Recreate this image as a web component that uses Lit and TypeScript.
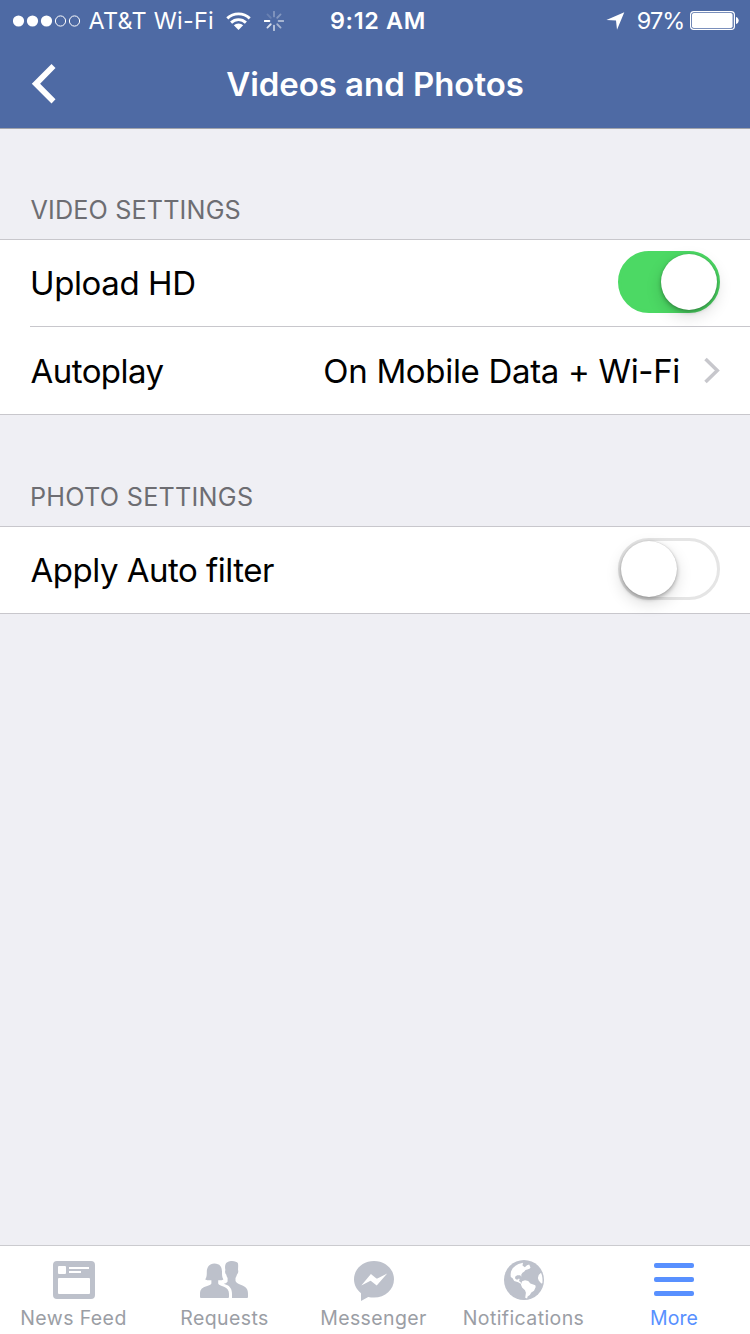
import { LitElement, html, css, svg } from "lit";
import { customElement, property } from "lit/decorators.js";
import { classMap } from "lit/directives/class-map.js";

@customElement("status-bar")
export class StatusBar extends LitElement {
  static styles = css`
    :host {
      display: grid;
      grid-template-columns: 330px auto 1fr;
      align-items: center;
      height: 41px;
      color: #fff;
      font-size: 23.4px;
      line-height: 28px;
      white-space: nowrap;
    }
    .side { display: flex; align-items: center; }
    .left { padding-left: 13px; }
    .right { justify-content: flex-end; padding-right: 11px; }
    svg { display: block; flex: none; }
    .carrier { margin-left: 7.5px; letter-spacing: 0.26px; }
    .wifi { margin-left: 12px; }
    .spinner { margin-left: 13px; }
    .time { font-weight: 600; letter-spacing: 0.65px; }
    .percent { margin: 0 5.5px 0 11.5px; letter-spacing: -0.8px; }
  `;

  render() {
    const spokes = [0.3, 0.3, 0.5, 0.5, 0.65, 0.8, 1, 0.15];
    return html`
      <div class="side left">
        <svg width="68" height="12" viewBox="0 0 68 12">
          ${[0, 1, 2].map((i) => svg`<circle cx=${5.5 + i * 14} cy="6" r="5.6" fill="#fff"/>`)}
          ${[3, 4].map((i) => svg`<circle cx=${5.5 + i * 14} cy="6" r="5.1" fill="none" stroke="#fff"/>`)}
        </svg>
        <span class="carrier">AT&amp;T Wi-Fi</span>
        <svg class="wifi" width="25" height="20" viewBox="0 0 25 20">
          <g fill="none" stroke="#fff" stroke-width="2.9">
            <path d="M1.3 7.4a16 16 0 0 1 22.4 0"/>
            <path d="M5.1 11.6a10.6 10.6 0 0 1 14.8 0"/>
          </g>
          <path d="M12.5 19 7.8 14.3a6.8 6.8 0 0 1 9.4 0z" fill="#fff"/>
        </svg>
        <svg class="spinner" width="20" height="20" viewBox="-10 -10 20 20">
          ${spokes.map((o, i) => svg`<path d="M0-4.6V-9.3" stroke="#fff" stroke-width="1.8" stroke-linecap="round"
            opacity=${o} transform=${`rotate(${i * 45})`}/>`)}
        </svg>
      </div>
      <span class="time">9:12 AM</span>
      <div class="side right">
        <svg width="19" height="18" viewBox="0 0 19 18"><path d="M18.3.2 11 17.8 10 8.6.4 7.9z" fill="#fff"/></svg>
        <span class="percent">97%</span>
        <svg width="49" height="19" viewBox="0 0 49 19">
          <rect x=".6" y=".6" width="43.8" height="17.8" rx="3.2" fill="none" stroke="#fff" stroke-width="1.2"/>
          <rect x="2" y="2" width="40.6" height="15" rx="1.8" fill="#fff"/>
          <path d="M46 6c3.6 1 3.6 6 0 7z" fill="#fff"/>
        </svg>
      </div>
    `;
  }
}

@customElement("toggle-switch")
export class ToggleSwitch extends LitElement {
  @property({ type: Boolean }) on = false;

  static styles = css`
    :host { display: block; }
    .track {
      box-sizing: border-box;
      display: flex;
      width: 102px;
      height: 62px;
      border: 3px solid #e5e5e5;
      border-radius: 31px;
      background: #fff;
    }
    .track.on { justify-content: flex-end; border-color: #4cd964; background: #4cd964; }
    .knob {
      width: 56px;
      height: 56px;
      border-radius: 50%;
      background: #fff;
      box-shadow: 0 6px 16px rgba(0, 0, 0, 0.15), 0 2px 4px rgba(0, 0, 0, 0.28), 0 0 1px rgba(0, 0, 0, 0.2);
    }
  `;

  render() {
    return html`<div class=${classMap({ track: true, on: this.on })}><div class="knob"></div></div>`;
  }
}

const ICONS = {
  feed: svg`
    <path fill-rule="evenodd" d="M7 5h34a4 4 0 0 1 4 4v30a4 4 0 0 1-4 4H7a4 4 0 0 1-4-4V9a4 4 0 0 1 4-4z
      M9 10a1 1 0 0 0-1 1v6a1 1 0 0 0 1 1h6a1 1 0 0 0 1-1v-6a1 1 0 0 0-1-1z
      M19 11v2h20v-2z M19 15v2h12v-2z
      M9 22a1 1 0 0 0-1 1v14a1 1 0 0 0 1 1h30a1 1 0 0 0 1-1V23a1 1 0 0 0-1-1z"/>`,
  requests: svg`
    <path d="M14.3 7.5C9.300 7.500 6.800 11.500 6.800 16c0 3 0 5-1.600 7.500 1.600.8 3.800 1 6.200.8v3.200C11 29 8 29.500 5 30.700 1.500 32 0 34 0 38v3a1 1 0 0 0 1 1h27a1 1 0 0 0 1-1v-3c0-4-1.700-6-5-7.300-3-1.200-5.500-1.700-5.800-3.200v-3.200c2.200.2 3.900 0 5.200-.8C22 21 22 19 22 16c0-5-2-8.500-7.700-8.500z"/>
    <path d="M25.300 9C26 6 29 5 32 5c3 0 5 1 5.800 2 .7 2 .2 5 .2 7 .6 1 .2 3.500-1 4.500-.4 1.500-1 2.500-1.500 3.500v3c.5 2 3.500 3 7 4.600 4 1.800 5.500 3.900 5.500 8.400v3a1 1 0 0 1-1 1H32v-4c0-5-2-7.500-5-9l-3.300-1.300c1.800-.3 3.300-.9 3.900-2.200V22c-.6-1-1.100-2-1.400-3.500-1.200-1-1.400-3.500-.8-4.500-.4-1.700-.5-3.300-.1-5z"/>`,
  messenger: svg`
    <path fill-rule="evenodd" d="M24 5c11.200 0 20 8 20 18.300S35.200 41.600 24 41.600c-2 0-4-.2-5.800-.6L11 45v-7.800C6.700 33.800 4 28.900 4 23.300 4 13 12.800 5 24 5z
      M11.300 29.400 20.900 17.900 26.400 22.400Q26.900 22.700 27.400 22.400L37.200 17.600 26.700 29.400 21 24.900Q20.500 24.600 20 24.900z"/>`,
  globe: svg`
    <circle cx="24" cy="24" r="20"/>
    <g fill="#fff">
      <path d="M10.600 18.500 11 15.500 12.700 12.300 15.500 9.700 18.500 8 23 6.800 22.500 9.500 24.800 11.300 27 9.200 29.200 8.600 30.500 11.500 29.500 12.800 27.300 13.600 25.500 14 24.300 15.400 22.500 16.800 21.300 18.500 21.300 20.800 20.200 19.300 17.200 19.200 15.300 20.400 15 22.300 16.300 23.600 18 23.600 18.800 22.600 19.700 22.900 19 25 20.800 26.200 20.900 28 18.200 26.300 14.200 24.900 12.600 22.300 10.800 21z"/>
      <path d="M22.100 25.300 25 24.200l3.200.8 2.200 2.400 4.900 1.900.4 1.700-1.700 3.700-2.700 1.700-1.500 2.600-2.200 1.600-.5 2-1.900-.8.700-5-.9-2.500-2.900-2.700-1.200-3.200z"/>
      <path d="M41 16.800 38.700 19l-.8 3 .8 2.600 2.600 3 1.100-.4c.4-3.600.1-7-1.400-10.400z"/>
    </g>`,
  menu: svg`
    <rect x="4" y="7" width="40" height="5" rx="2"/>
    <rect x="4" y="21" width="40" height="5" rx="2"/>
    <rect x="4" y="35" width="40" height="5" rx="2"/>`,
};

interface Tab {
  icon: keyof typeof ICONS;
  label: string;
  active?: boolean;
}

const TABS: Tab[] = [
  { icon: "feed", label: "News Feed" },
  { icon: "requests", label: "Requests" },
  { icon: "messenger", label: "Messenger" },
  { icon: "globe", label: "Notifications" },
  { icon: "menu", label: "More", active: true },
];

@customElement("tab-bar")
export class TabBar extends LitElement {
  static styles = css`
    :host {
      display: grid;
      grid-template-columns: repeat(5, 150px);
      box-sizing: border-box;
      height: 89px;
      border-top: 1px solid #cbcbcf;
      background: #fff;
    }
    .tab {
      display: flex;
      flex-direction: column;
      align-items: center;
      padding: 10px 2px 0 0;
      color: #9b9ea5;
      font-size: 19.5px;
      line-height: 24px;
      letter-spacing: 0.4px;
      white-space: nowrap;
    }
    svg { display: block; margin-bottom: 2px; fill: #bdc1cb; }
    span { margin-right: 1px; }
    .requests span { margin: 0 0 0 1px; }
    .active { color: #5890ff; letter-spacing: 0.06px; }
    .active span { margin: 0; }
    .active svg { fill: #5890ff; }
  `;

  render() {
    return TABS.map(
      (t) => html`<div class=${classMap({ tab: true, [t.icon]: true, active: !!t.active })}>
        <svg width="48" height="48" viewBox="0 0 48 48">${ICONS[t.icon]}</svg>
        <span>${t.label}</span>
      </div>`,
    );
  }
}

@customElement("app-root")
export class AppRoot extends LitElement {
  static styles = css`
    :host {
      display: flex;
      flex-direction: column;
      width: 750px;
      height: 1334px;
      overflow: hidden;
      background: #efeff4;
      color: #000;
      font-family: "Inter", "Liberation Sans", sans-serif;
    }
    header { height: 128px; border-bottom: 1px solid #a2a4ab; background: #4e6aa4; }
    .nav {
      display: grid;
      grid-template-columns: 75px 1fr 75px;
      align-items: center;
      height: 86px;
    }
    .back { display: block; margin-left: 30px; }
    h1 {
      margin: 0;
      color: #fff;
      font-size: 33px;
      font-weight: 600;
      line-height: 40px;
      letter-spacing: -0.05px;
      text-align: center;
    }
    main { flex: 1; }
    h2 {
      margin: 0;
      padding: 0 30.5px 13px;
      color: #6d6d72;
      font-size: 25.2px;
      font-weight: 400;
      line-height: 32px;
      letter-spacing: 0.15px;
    }
    .video { padding-top: 65px; }
    .photo { padding-top: 66px; letter-spacing: 0.26px; padding-left: 30px; }
    .group { border: solid #c8c7cc; border-width: 1px 0; background: #fff; }
    .row {
      display: flex;
      align-items: center;
      justify-content: space-between;
      height: 86px;
      padding: 0 30px;
      font-size: 33px;
      line-height: 40px;
      white-space: nowrap;
    }
    .row toggle-switch { margin-bottom: 2px; }
    .row + .row {
      height: 87px;
      margin-left: 30px;
      padding-left: 0;
      border-top: 1px solid #c8c7cc;
    }
    .upload { letter-spacing: -0.4px; }
    .autoplay { padding-left: 0.6px; letter-spacing: -0.57px; }
    .filter { padding-left: 0.6px; letter-spacing: -0.5px; }
    .value { margin-left: auto; letter-spacing: -0.32px; }
    .chevron { display: block; margin-left: 24px; }
  `;

  render() {
    return html`
      <header>
        <status-bar></status-bar>
        <div class="nav">
          <svg class="back" width="26" height="42" viewBox="0 0 26 42">
            <path d="M21.500 1 25.500 5 10.100 20.700 25.500 36.300 21.500 40.400 1.800 20.700z" fill="#fff"/>
          </svg>
          <h1>Videos and Photos</h1>
        </div>
      </header>
      <main>
        <h2 class="video">VIDEO SETTINGS</h2>
        <div class="group">
          <div class="row"><span class="upload">Upload HD</span><toggle-switch on></toggle-switch></div>
          <div class="row">
            <span class="autoplay">Autoplay</span>
            <span class="value">On Mobile Data + Wi-Fi</span>
            <svg class="chevron" width="16" height="28" viewBox="0 0 16 28">
              <path d="M1.500 1.900 13.300 13.500 1.500 25.100" fill="none" stroke="#c7c7cc" stroke-width="3.500"/>
            </svg>
          </div>
        </div>
        <h2 class="photo">PHOTO SETTINGS</h2>
        <div class="group">
          <div class="row"><span class="filter">Apply Auto filter</span><toggle-switch></toggle-switch></div>
        </div>
      </main>
      <tab-bar></tab-bar>
    `;
  }
}
